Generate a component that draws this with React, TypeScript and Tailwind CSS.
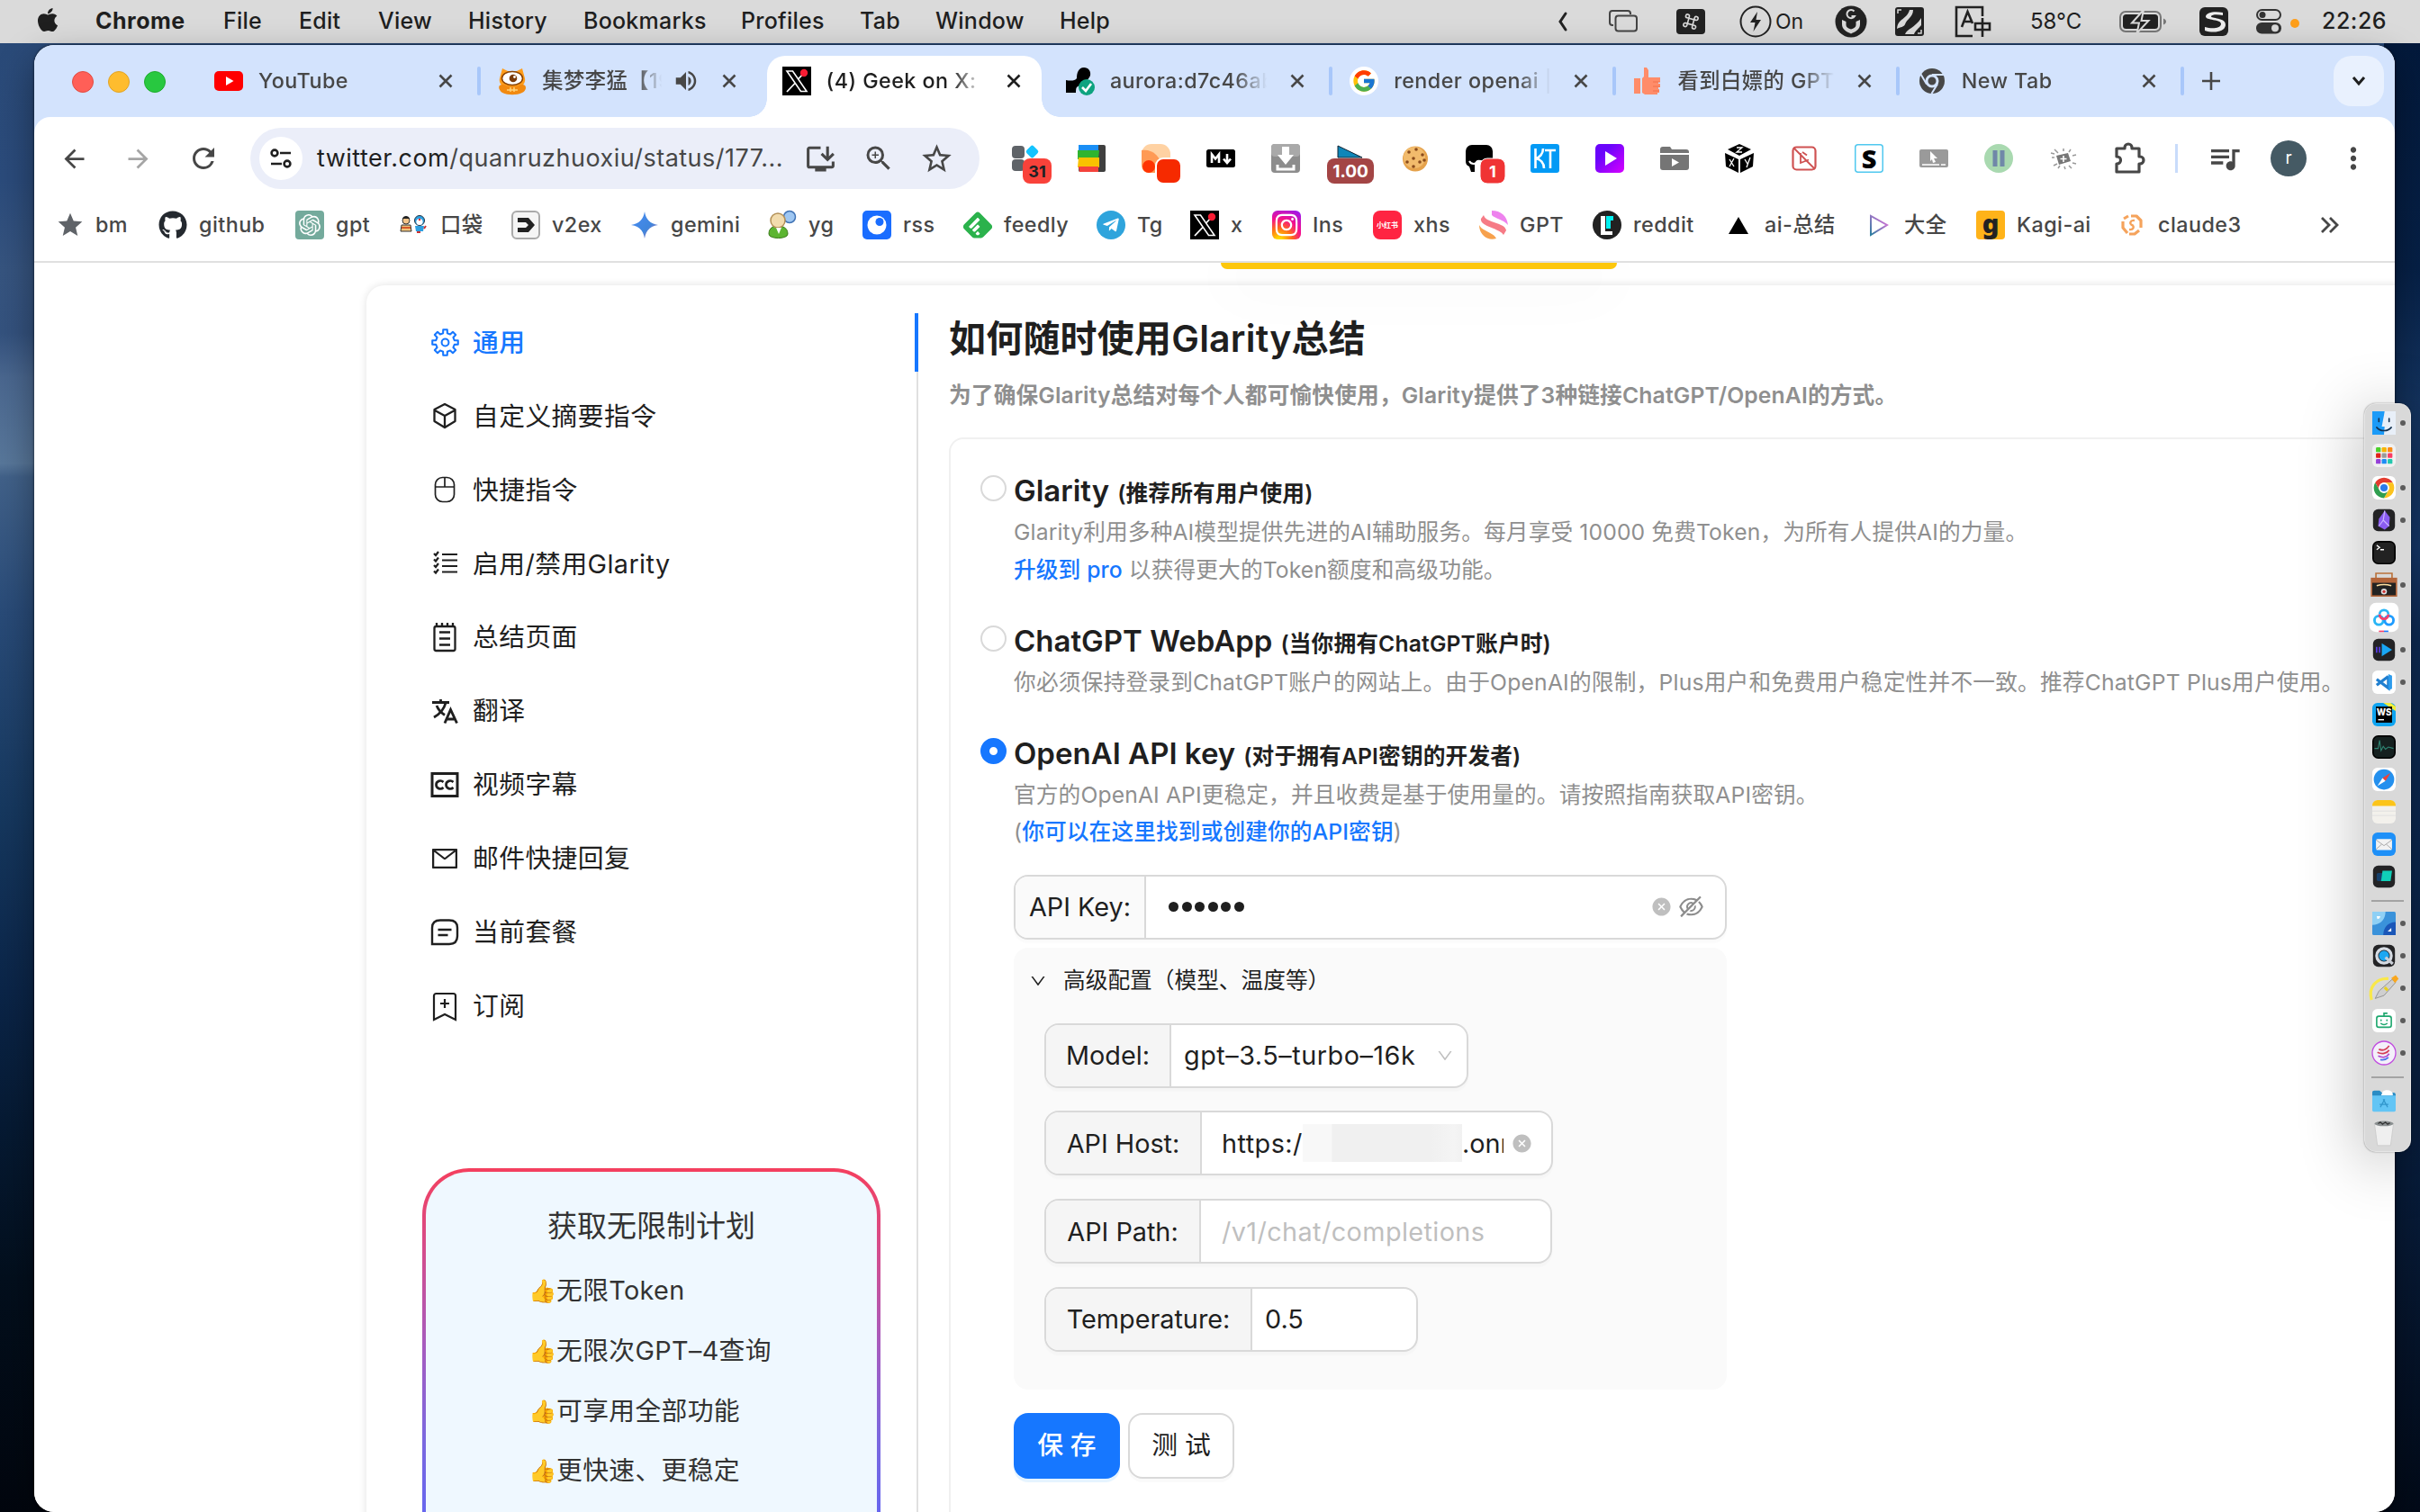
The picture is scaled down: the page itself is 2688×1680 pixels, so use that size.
import type { ReactNode } from 'react'
import { FaApple, FaGithub, FaInstagram, FaTelegramPlane } from 'react-icons/fa'
import { FcGoogle } from 'react-icons/fc'
import {
  MdArrowBack, MdArrowForward, MdRefresh, MdInstallDesktop, MdZoomIn, MdStarBorder, MdStar,
  MdVolumeUp, MdQueueMusic, MdMoreVert,
} from 'react-icons/md'
import { SiOpenai, SiFeedly } from 'react-icons/si'
import { AiOutlineMail, AiOutlineEyeInvisible, AiFillCloseCircle, AiOutlineDown } from 'react-icons/ai'

/* ---------- shared drawings ---------- */

function Svg({ children, className = 'size-8', box = '0 0 32 32' }: { children: ReactNode; className?: string; box?: string }) {
  return <svg viewBox={box} className={`shrink-0 overflow-visible ${className}`} fill="none">{children}</svg>
}

const XLogo = () => (
  <Svg>
    <rect width="32" height="32" fill="#000" />
    <path d="M5 5h6.5l15.5 22.500h-6.500z" stroke="#fff" strokeWidth="1.600" />
    <path d="M25.500 5.500 17.500 14M14 18.500 5 28" stroke="#fff" strokeWidth="1.800" />
    <circle cx="24" cy="7" r="4.200" fill="#f91c33" />
  </Svg>
)

const ChromeBall = () => (
  <Svg>
    <circle cx="16" cy="16" r="14" fill="#474747" />
    <path d="M16 9H29M22 19.500 15.500 30M10 19.500 3.500 8.500" stroke="#d3e3fd" strokeWidth="2" />
    <circle cx="16" cy="16" r="6" fill="#474747" stroke="#d3e3fd" strokeWidth="3" />
  </Svg>
)

/* Eight-toothed gear outline, four corner points per tooth. */
const gearPoints = Array.from({ length: 8 }, (_, i) => {
  const at = (deg: number, r: number) => {
    const a = ((i * 45 + deg - 90) * Math.PI) / 180
    return `${(16 + r * Math.cos(a)).toFixed(2)},${(16 + r * Math.sin(a)).toFixed(2)}`
  }
  return [at(-13, 10.2), at(-9, 14), at(9, 14), at(13, 10.2)].join(' ')
}).join(' ')

const Gear = () => (
  <Svg className="size-[33px]">
    <polygon points={gearPoints} stroke="currentColor" strokeWidth="2" strokeLinejoin="round" />
    <circle cx="16" cy="16" r="3.800" stroke="currentColor" strokeWidth="2" />
  </Svg>
)

/* ---------- macOS menu bar ---------- */

const menus: [string, string][] = [
  ['File', 'w-[84px]'], ['Edit', 'w-[88px]'], ['View', 'w-[100px]'], ['History', 'w-[128px]'],
  ['Bookmarks', 'w-[175px]'], ['Profiles', 'w-[132px]'], ['Tab', 'w-[84px]'], ['Window', 'w-[138px]'], ['Help', 'w-[80px]'],
]

function MenuBar() {
  return (
    <div className="flex h-12 shrink-0 items-center bg-[#dadada] pl-[38px] text-[25px] font-medium tracking-[0.01em] text-[#1f1f1f]">
      <FaApple className="mb-1 mr-[38px] size-[30px]" />
      <span className="w-[142px] font-bold tracking-[0.02em]">Chrome</span>
      {menus.map(([name, w]) => <span key={name} className={w}>{name}</span>)}
      <div className="ml-auto flex items-center pr-[36px]">
        <span className="flex w-[59px]">
          <Svg className="h-6 w-4" box="0 0 16 24"><path d="M11 3 5 12l6 9" stroke="#222" strokeWidth="3" strokeLinecap="round" /></Svg>
        </span>
        <span className="flex w-[75px]">
          <Svg><path d="M5 20H4a3 3 0 0 1-3-3V7a3 3 0 0 1 3-3h17a3 3 0 0 1 3 3v1" stroke="#444" strokeWidth="2" /><rect x="7.500" y="9.500" width="23.500" height="17" rx="3" stroke="#444" strokeWidth="2" /></Svg>
        </span>
        <span className="flex w-[70px]">
          <Svg><rect y="2" width="32" height="28" rx="4" fill="#222" /><path d="M13 13h6v6h-6zM13 13h-2a2 2 0 1 1 2-2zM19 13v-2a2 2 0 1 1 2 2zM19 19h2a2 2 0 1 1-2 2zM13 19v2a2 2 0 1 1-2-2z" transform="rotate(15 16 16)" stroke="#dadada" strokeWidth="1.600" /></Svg>
        </span>
        <span className="flex w-[40px]">
          <Svg className="size-[36px]" box="0 0 36 36"><circle cx="18" cy="18" r="16.500" stroke="#222" strokeWidth="2" /><path d="M20 7 12 19h5.500L15.500 29 24 16h-5.500z" fill="#222" /></Svg>
        </span>
        <span className="w-[66px] text-[23px] font-normal tracking-normal">On</span>
        <span className="flex w-[67px]">
          <Svg className="size-[36px]" box="0 0 36 36"><circle cx="18" cy="18" r="17.500" fill="#222" /><path d="M8 16v5c0 6 5 8 10 10.500 5-2.500 10-4.500 10-10.500v-5l-4.500 2v4c0 2-2.500 3.500-5.500 4.500-3-1-5.500-2.500-5.500-4.500v-4z" fill="#dadada" /><path d="M21.500 6.500A4.600 4.600 0 1 0 22 12h-3.500" stroke="#dadada" strokeWidth="2" /></Svg>
        </span>
        <span className="flex w-[66px]">
          <Svg><rect width="32" height="32" rx="3" fill="#222" /><path d="M2 24C3 12 13 14 16 3h4c0 8-7 10-9 16-1 3-5 3-9 5z" fill="#dadada" /><path d="M11 30c2-6 11-7 18-18v8c-3 4-6 5-8 10z" fill="#dadada" /><path d="M3 7V3h4M29 25v4h-4" stroke="#dadada" strokeWidth="1.500" /></Svg>
        </span>
        <span className="flex w-[84px]">
          <Svg className="h-[36px] w-[42px]" box="0 0 42 36"><path d="M31 12V2H2v32h18" stroke="#222" strokeWidth="2.600" /><path d="m8 24 6.500-17L20 20M10.500 18h8" stroke="#222" strokeWidth="2.600" /><path d="M23 20h16v7H23zM31 14v21" stroke="#222" strokeWidth="2.600" /></Svg>
        </span>
        <span className="w-[99px] text-[24px] font-normal tracking-normal">58°C</span>
        <span className="flex w-[89px]">
          <Svg className="h-6 w-[52px]" box="0 0 52 24"><rect x="1" y="1" width="45" height="22" rx="6" stroke="#777" strokeWidth="2" /><rect x="4" y="4" width="39" height="16" rx="3.500" fill="#222" /><path d="M49 8.500c2 .8 3 2 3 3.500s-1 2.700-3 3.500z" fill="#777" /><path d="M27-1 14 13.500h8L19.500 25l13-14h-8z" fill="#222" stroke="#dadada" strokeWidth="2" /></Svg>
        </span>
        <span className="flex w-[63px]">
          <Svg><rect width="32" height="32" rx="6" fill="#222" /><path d="M26 6C16 4 8 6 7 10c-1 5 18 3 17 9-1 5-11 5-18 3v4c9 3 22 2 23-6 1-9-17-7-16-10 1-2 7-2 13-1z" fill="#eee" /></Svg>
        </span>
        <span className="flex w-[38px]">
          <Svg className="h-[28px] w-[28px]" box="0 0 28 28"><rect x="1" y="1" width="26" height="11" rx="5.500" stroke="#333" strokeWidth="2" /><circle cx="7" cy="6.500" r="3.500" fill="#333" /><rect y="15" width="28" height="12.500" rx="6.200" fill="#333" /><circle cx="21" cy="21.200" r="4" fill="#dadada" /></Svg>
        </span>
        <span className="flex w-[35px] pt-1"><i className="size-2.5 rounded-full bg-[#ff9f1a]" /></span>
        <span className="w-[73px] tracking-[0.02em]">22:26</span>
      </div>
    </div>
  )
}

/* ---------- browser tabs ---------- */

const CloseX = ({ dark = false }: { dark?: boolean }) => (
  <Svg className="size-4" box="0 0 16 16"><path d="m1.500 1.500 13 13m0-13-13 13" stroke={dark ? '#1f1f1f' : '#474747'} strokeWidth="2.600" /></Svg>
)

function Tab({ icon, title, active = false, sound = false, sep = true }: { icon: ReactNode; title: string; active?: boolean; sound?: boolean; sep?: boolean }) {
  return (
    <div className="relative flex h-[68px] w-[315.3px] shrink-0 items-center self-end pb-3">
      {active && (
        <>
          <div className="absolute inset-y-0 -left-[17px] right-[27px] rounded-t-[20px] bg-white" />
          <div className="absolute bottom-0 -left-[37px] size-5 bg-[radial-gradient(circle_at_0_0,transparent_19.5px,#fff_20px)]" />
          <div className="absolute bottom-0 right-[7px] size-5 bg-[radial-gradient(circle_at_100%_0,transparent_19.5px,#fff_20px)]" />
        </>
      )}
      <div className="relative flex size-8">{icon}</div>
      <div className={`relative ml-[17px] overflow-hidden whitespace-nowrap text-[23.3px] font-medium tracking-[0.02em] [mask-image:linear-gradient(to_right,#000_78%,transparent_98%)] ${sound ? 'w-[136px]' : 'w-[178px]'} ${active ? 'text-[#1f1f1f]' : 'text-[#474747]'}`}>{title}</div>
      {sound && <MdVolumeUp className="ml-[9px] size-[30px] text-[#474747]" />}
      <div className={`relative ${sound ? 'ml-[25px]' : 'ml-[22px]'}`}><CloseX dark={active} /></div>
      {sep && <div className="ml-[27px] h-8 w-1 rounded-full bg-[#a8c7fa]" />}
    </div>
  )
}

function TabStrip() {
  return (
    <div className="flex h-20 shrink-0 items-center bg-[#d3e3fd]">
      <div className="flex w-[200px] shrink-0 items-center gap-4 pl-[42px] pt-0.5">
        <i className="size-6 rounded-full border border-[#e24b41] bg-[#ff5f57]" />
        <i className="size-6 rounded-full border border-[#e1a325] bg-[#febc2e]" />
        <i className="size-6 rounded-full border border-[#1dad2b] bg-[#28c840]" />
      </div>
      <Tab title="YouTube" icon={<Svg><rect y="5" width="32" height="22" rx="5" fill="#f00" /><path d="m13 11 8.500 5-8.500 5z" fill="#fff" /></Svg>} />
      <Tab title="集梦李猛【19" sound sep={false} icon={
        <Svg>
          <path d="M5 2l6 3h10l6-3 3 11c1 4-2 8-4 9H6c-3-2-5-5-4-9z" fill="#ff9d1b" />
          <path d="M2 21c2-2 6-1 9 1h10c3-2 7-3 9-1s1 6-3 8c-6 3-16 3-22 0-3-2-5-6-3-8z" fill="#f28a10" />
          <ellipse cx="16" cy="13" rx="11.500" ry="7.500" fill="#fff" stroke="#8c4300" strokeWidth="1.500" />
          <circle cx="17" cy="13" r="4.300" fill="#7a3b0a" /><circle cx="18.500" cy="11.500" r="1.400" fill="#fff" />
          <path d="M10 26h12M14 23v5M18 23v5" stroke="#ffd27a" strokeWidth="1.500" />
        </Svg>} />
      <Tab title="(4) Geek on X:" active sep={false} icon={<XLogo />} />
      <Tab title="aurora:d7c46ab" icon={
        <Svg>
          <path d="M0 15c5 1 10 1 12-2 0-6 2-12 8-12 5 0 8 4 7 9-1 3-4 5-5 7-2 2-4 3-4 5-2-1-4-1-6 1-1 1-1 4-1 6H0z" fill="#000" />
          <circle cx="23" cy="23" r="9" fill="#0ea37f" /><path d="m18 23 4 4 6-8" stroke="#fff" strokeWidth="2.600" />
        </Svg>} />
      <Tab title="render openai |" icon={<span className="flex size-8 items-center justify-center rounded-full bg-white"><FcGoogle className="size-7" /></span>} />
      <Tab title="看到白嫖的 GPT" icon={
        <Svg><path d="M1 13h7v17H1zM10 13l2-2V1h3l2 3v8h13v5h-2v2h2v4h-2v2h1v4h-2v2H13l-3-2z" fill="#ff8c69" /><path d="M22 17h8M22 22h8M22 27h7" stroke="#f2704a" strokeWidth="1.200" /></Svg>} />
      <Tab title="New Tab" icon={<ChromeBall />} />
      <Svg className="size-[22px]" box="0 0 22 22"><path d="M11 1v20M1 11h20" stroke="#474747" strokeWidth="2.600" /></Svg>
      <div className="ml-auto mr-3 flex h-14 w-14 items-center justify-center rounded-[20px] bg-[#e9f1fe]">
        <Svg className="h-3 w-4" box="0 0 16 12"><path d="m2 2 6 7 6-7" stroke="#1f1f1f" strokeWidth="3" /></Svg>
      </div>
    </div>
  )
}

/* ---------- toolbar ---------- */

const extensions: ReactNode[] = [
  <>
    <rect x="0" y="2" width="14" height="14" rx="4" fill="#5f6368" /><rect x="0" y="17" width="14" height="13" rx="4" fill="#5f6368" />
    <rect x="17" y="3" width="11" height="11" rx="2.500" transform="rotate(45 22.500 8.500)" fill="#14c4ff" />
    <rect x="12" y="16" width="32" height="28" rx="8" fill="#f9423a" />
    <text x="28" y="36.500" textAnchor="middle" fontSize="18" fontWeight="700" fill="#202124">31</text>
  </>,
  <>
    <rect x="2" y="1" width="30" height="30" rx="2" fill="#3f3f3f" /><path d="M2 1h22v8H2z" fill="#1a8ff5" /><path d="M1 7h24l-1 10H1z" fill="#2fb42f" />
    <path d="M2 15h23v11H1z" fill="#f9c200" /><path d="M2 25h22v6H3z" fill="#f4433c" />
  </>,
  <>
    <rect width="32" height="30" rx="11" fill="#ffd2a3" /><path d="M0 7c11-2 22 6 22 20l-6 5H8c-5 0-8-4-8-9z" fill="#ff9a55" /><circle cx="8" cy="25" r="7" fill="#ff3403" />
    <rect x="16" y="16" width="28" height="28" rx="8" fill="#f62a00" stroke="#fff" strokeWidth="2" />
  </>,
  <>
    <rect y="6" width="32" height="20" rx="2.500" fill="#000" /><path d="M6 21v-9.500l4 5 4-5V21M23 11v9m-4-3.500 4 4.500 4-4.500" stroke="#fff" strokeWidth="2.600" />
  </>,
  <>
    <rect width="32" height="32" rx="4" fill="#8d8d8d" /><rect width="32" height="14" rx="4" fill="#a9a9a9" /><path d="M12 3h8v9h5l-9 11-9-11h5z" fill="#fff" /><path d="M7 23v5h18v-5" stroke="#fff" strokeWidth="3" />
  </>,
  <>
    <path d="M2 2v13h27z" fill="#0f86b8" stroke="#123" strokeWidth="1" /><rect x="-10" y="16" width="52" height="28" rx="8" fill="#a34545" />
    <text x="16" y="37" textAnchor="middle" fontSize="19" fontWeight="700" fill="#fff">1.00</text>
  </>,
  <>
    <circle cx="16" cy="16.500" r="14" fill="#e5a24c" /><circle cx="15" cy="15" r="12" fill="#f2bb6c" />
    {[[9, 9], [17, 6], [24, 12], [14, 16], [7, 20], [21, 20], [14, 25], [26, 18]].map(([x, y]) => <circle key={`${x}-${y}`} cx={x} cy={y} r="1.800" fill="#8a4b1c" />)}
  </>,
  <>
    <path d="M0 8a7 7 0 0 1 7-7h16a7 7 0 0 1 7 7v10H16c-3-1-6 1-6 5v8H6l-2-6c-3-1-4-3-4-6z" fill="#000" /><path d="M4 19c2 4 8 4 10 0" stroke="#fff" strokeWidth="2" />
    <rect x="16" y="16" width="28" height="28" rx="8" fill="#f03434" stroke="#fff" strokeWidth="1" />
    <text x="30" y="36.500" textAnchor="middle" fontSize="18" fontWeight="700" fill="#fff">1</text>
  </>,
  <>
    <rect width="32" height="32" rx="3" fill="#039af5" /><path d="M5.500 5v22M14 5c0 6-4 10-8 11 5 1 9 5 9 11M16 7h12M22 7v20" stroke="#fff" strokeWidth="2.600" />
  </>,
  <>
    <defs><linearGradient id="play" x1="0" x2="1" y2="1"><stop offset=".3" stopColor="#6a05fb" /><stop offset="1" stopColor="#d800ff" /></linearGradient></defs>
    <rect width="32" height="32" rx="5" fill="url(#play)" /><path d="m11 8 13 8-13 8z" fill="#fff" />
  </>,
  <>
    <path d="M0 6a3 3 0 0 1 3-3h8l2 3h16a3 3 0 0 1 3 3v1H0z" fill="#757575" /><path d="M0 12h32v14a3 3 0 0 1-3 3H3a3 3 0 0 1-3-3z" fill="#757575" /><path d="m13 16 8 4.500-8 4.500z" fill="#fff" />
  </>,
  <>
    <path d="m16 0 13 6-13 7L3 6zM0 10l15 7v15L1 25zM32 10l-15 7v15l14-7z" fill="#000" /><path d="M13 4h6l-6 5h6M5 17l5 8m0-9-5 9M22 17l3 5m3-7-4 11" stroke="#fff" strokeWidth="1.300" />
  </>,
  <>
    <rect x="3.500" y="3.500" width="25" height="25" rx="4" stroke="#cf5252" strokeWidth="2.200" /><path d="M4 4l24 24M12 10v11l9-3.500M14 9l5 3.500" stroke="#cf5252" strokeWidth="1.800" />
  </>,
  <>
    <rect x=".75" y=".75" width="30.500" height="30.500" rx="3" fill="#fff" stroke="#4fc8ef" strokeWidth="1.500" />
    <text x="16" y="26.500" textAnchor="middle" fontSize="29" fontWeight="900" fontFamily="Noto Sans" fill="#000">S</text>
  </>,
  <>
    <rect y="6" width="32" height="20" rx="2" fill="#9a9a9a" /><path d="m12 8 8 8h-4l2 4-3 1-1-4-2 2z" fill="#fff" /><path d="M3 23h19m2 0h5" stroke="#fff" strokeWidth="1.500" />
  </>,
  <>
    <circle cx="16" cy="16" r="16" fill="#a9d9b0" /><rect x="9.500" y="7" width="5" height="18" fill="#7088a8" /><rect x="17.500" y="7" width="5" height="18" fill="#7088a8" />
  </>,
  <>
    <path d="M8 13l13-3 3 9-13 4z" fill="#777" /><path d="M16 13v7m-3.500-3.500h7" stroke="#fff" strokeWidth="1.600" />
    <path d="M6 6l4 4m6-5v3m8-2-2 3m8 3-4 1M3 15h3m-1 9 4-2m1 5 2-3m6 4-1-3m8 2-3-3m8-2-4-1M2 10l4 1" stroke="#999" strokeWidth="1.500" />
  </>,
]

function Toolbar() {
  return (
    <div className="bg-[#d3e3fd]">
      <div className="flex h-[90px] items-center rounded-t-[18px] bg-white pt-0.5 text-[#474747]">
        <MdArrowBack className="ml-[28px] size-[33px]" />
        <MdArrowForward className="ml-[38px] size-[33px] text-[#a5a5a5]" />
        <MdRefresh className="ml-[38px] size-[36px]" />
        <div className="ml-[34px] flex h-[68px] w-[810px] shrink-0 items-center rounded-full bg-[#ebeef9] pl-2.5">
          <span className="flex size-12 items-center justify-center rounded-full bg-white">
            <Svg className="size-6" box="0 0 24 24"><g stroke="#1f1f1f" strokeWidth="2.600"><circle cx="5" cy="6" r="3.400" /><path d="M11 6h12M1 18h12" /><circle cx="19" cy="18" r="3.400" /></g></Svg>
          </span>
          <span className="ml-4 w-[541px] shrink-0 whitespace-nowrap text-[27px] tracking-[0.018em] text-[#474747]"><span className="text-[#1f1f1f]">twitter.com</span>/quanruzhuoxiu/status/177...</span>
          <MdInstallDesktop className="size-[37px] shrink-0" />
          <MdZoomIn className="ml-[28px] size-[36px] shrink-0" />
          <MdStarBorder className="ml-[27px] size-[39px] shrink-0" />
        </div>
        <div className="ml-[36px] flex gap-10">
          {extensions.map((e, i) => <Svg key={i}>{e}</Svg>)}
        </div>
        <Svg className="ml-[39px] size-9" box="0 0 36 36">
          <path d="M4 7h9V6a4 4 0 0 1 8 0v1h8v9h1a4 4 0 0 1 0 8h-1v9H4v-9c6 0 6-8 0-8z" stroke="#474747" strokeWidth="3.200" strokeLinejoin="round" />
        </Svg>
        <div className="ml-[33px] h-8 w-[3px] bg-[#c9dcfb]" />
        <MdQueueMusic className="ml-[32px] size-[40px]" />
        <span className="ml-[31px] flex size-10 items-center justify-center rounded-full bg-[#455a64] text-[19px] text-white">r</span>
        <MdMoreVert className="ml-[33px] size-[38px]" />
      </div>
    </div>
  )
}

/* ---------- bookmarks ---------- */

const bookmarks: [string, string, ReactNode][] = [
  ['github', 'w-[152px]', <FaGithub className="size-8 text-[#24292f]" />],
  ['gpt', 'w-[116px]', <span className="flex size-8 items-center justify-center rounded bg-[#74aa9c]"><SiOpenai className="size-6 text-white" /></span>],
  ['口袋', 'w-[124px]', (
    <Svg>
      <circle cx="7" cy="11" r="4" fill="#f4c489" stroke="#333" /><path d="M3 9c1-4 7-4 8 0z" fill="#222" /><path d="M2 16h10l1 7H1z" fill="#f0c27a" stroke="#333" /><path d="M2 19h10" stroke="#d5582b" strokeWidth="2" /><circle cx="22" cy="11" r="5.500" fill="#2b9fe0" stroke="#234" /><circle cx="22" cy="12.500" r="3.600" fill="#fff" /><circle cx="22" cy="10" r="1.200" fill="#e22" /><path d="M17 17h10l-1 6h-8z" fill="#2b9fe0" /><path d="M27 20l2-3M19 24h4" stroke="#c33" strokeWidth="2" />
    </Svg>
  )],
  ['v2ex', 'w-[132px]', <Svg><rect x="1" y="1" width="30" height="30" rx="5" fill="#f5f5f5" stroke="#aaa" strokeWidth="2" /><path d="M7 8h12l7 8-7 8H7v-5h9l3-3-3-3H7z" fill="#222" /></Svg>],
  ['gemini', 'w-[153px]', (
    <Svg><defs><linearGradient id="gem" x2="1" y2="1"><stop stopColor="#4b8cf5" /><stop offset=".6" stopColor="#3f86dd" /><stop offset="1" stopColor="#b86fb0" /></linearGradient></defs><path d="M16 1c1.500 9 6 13.500 15 15-9 1.500-13.500 6-15 15-1.500-9-6-13.500-15-15 9-1.500 13.500-6 15-15z" fill="url(#gem)" /></Svg>
  )],
  ['yg', 'w-[105px]', (
    <Svg><circle cx="24" cy="7" r="6.500" fill="#9fc7f2" stroke="#4173b5" strokeWidth="1.500" /><path d="M1 26c0-7 5-9 10-9s11 2 11 9c0 6-21 6-21 0z" fill="#5cb531" stroke="#3a7a1b" /><circle cx="11" cy="11" r="8" fill="#f2dcae" stroke="#b39057" strokeWidth="1.500" /><path d="m9 19 3 7 3-7z" fill="#fff" /></Svg>
  )],
  ['rss', 'w-[112px]', <Svg><rect width="32" height="32" rx="5" fill="#1a6dff" /><circle cx="16" cy="16" r="10.500" fill="#fff" /><circle cx="19" cy="12.500" r="4.500" fill="#1a6dff" /></Svg>],
  ['feedly', 'w-[148px]', <SiFeedly className="size-8 text-[#2bb24c]" />],
  ['Tg', 'w-[104px]', <span className="flex size-8 items-center justify-center rounded-full bg-[#2fa4dc]"><FaTelegramPlane className="size-5 text-white" /></span>],
  ['x', 'w-[91px]', <XLogo />],
  ['Ins', 'w-[112px]', <span className="flex size-8 items-center justify-center rounded-md bg-[radial-gradient(circle_at_25%_105%,#ffd800_8%,#ff6a1a_35%,#f5108c_60%,#8a1bff_100%)]"><FaInstagram className="size-7 text-white" /></span>],
  ['xhs', 'w-[118px]', <span className="flex size-8 items-center justify-center rounded-lg bg-[#ff2442] text-[8px] font-bold tracking-normal text-white">小红书</span>],
  ['GPT', 'w-[126px]', (
    <Svg><path d="M14 0c10 0 17 6 18 16-5-6-14-7-18-11z" fill="#ee82ee" /><path d="M5 5c2 9 24 8 25 17l-3 5C22 19 0 18 2 9z" fill="#f67b86" /><path d="M0 16c3 7 16 8 19 15C8 34 0 26 0 16z" fill="#f7a14d" /></Svg>
  )],
  ['reddit', 'w-[146px]', <Svg><circle cx="16" cy="16" r="16" fill="#222" /><path d="M9 6h5v17h8v4H9z" fill="#fff" /><path d="M15 6h8v5h-3v9h-5z" fill="#00f0f0" /></Svg>],
  ['ai-总结', 'w-[155px]', <Svg><path d="M16 7 27 26H5z" fill="#000" /></Svg>],
  ['大全', 'w-[125px]', (
    <Svg><defs><linearGradient id="da" x2="1" y1="1" y2="0"><stop stopColor="#2c7fa0" /><stop offset="1" stopColor="#f06fe0" /></linearGradient></defs><path d="M8 6v21l18-11z" stroke="url(#da)" strokeWidth="2" /></Svg>
  )],
  ['Kagi-ai', 'w-[157px]', <span className="flex size-8 items-center justify-center rounded bg-[#ffb319] pb-1.5 font-['Noto_Sans'] text-[29px] font-black leading-none tracking-normal text-[#222]">g</span>],
  ['claude3', 'w-[150px]', <Svg><path d="M15 6h6l5 5v8M24 22l-5 4h-6M11 25l-5-6v-7M7 9l5-3" stroke="#f5a35c" strokeWidth="3.200" strokeLinejoin="round" /><path d="M19 11c-5-1-6 4-3 5s2 6-3 5" stroke="#f5a35c" strokeWidth="2.400" /></Svg>],
]

function Bookmarks() {
  return (
    <div className="flex h-[72px] shrink-0 items-center border-b-2 border-[#e0e0e0] pb-[10px] text-[23.3px] font-medium tracking-[0.02em] text-[#474747]">
      <MdStar className="ml-[24px] size-8 text-[#5f6368]" />
      <span className="ml-[12px] w-[70px]">bm</span>
      {bookmarks.map(([label, w, icon]) => (
        <span key={label} className={`flex shrink-0 items-center gap-[13px] whitespace-nowrap ${w}`}>{icon}{label}</span>
      ))}
      <Svg className="ml-auto mr-[61px] h-5 w-[22px]" box="0 0 22 20"><path d="m2 2 8 8-8 8m9-16 8 8-8 8" stroke="#474747" strokeWidth="2.800" /></Svg>
    </div>
  )
}

/* ---------- settings page ---------- */

const line = { stroke: '#1f1f1f', strokeWidth: 2 }

const nav: [string, ReactNode][] = [
  ['通用', <Gear />],
  ['自定义摘要指令', <Svg className="size-[30px]" box="0 0 30 30"><path d="m15 2 11.500 6v13L15 28 3.500 21V8zM4 9l11 6 11-6M15 15v12" {...line} strokeWidth={2.300} strokeLinejoin="round" /></Svg>],
  ['快捷指令', <Svg className="size-[30px]" box="0 0 30 30"><rect x="4.500" y="1.500" width="21" height="27" rx="8" {...line} strokeWidth={1.700} /><path d="M5 12h20M15 2v10" {...line} strokeWidth={1.700} /></Svg>],
  ['启用/禁用Glarity', <Svg className="size-[30px]" box="0 0 30 30"><path d="M12 5h17M12 11.500h17M12 18h17M12 24.500h17M3 4l2 2 3-4M3 10.500l2 2 3-4M3 17l2 2 3-4M3 23.500l2 2 3-4" {...line} strokeWidth={2.200} /></Svg>],
  ['总结页面', <Svg className="size-[32px]" box="0 0 32 32"><rect x="4.500" y="4" width="23" height="27" rx="2" {...line} strokeWidth={2.300} /><path d="M7 0v4M13 0v4M19 0v4M25 0v4M10 10.500h12M10 17.500h12M10 24.500h12" {...line} strokeWidth={2.300} /></Svg>],
  ['翻译', <Svg className="size-[30px]" box="0 0 30 30"><path d="M1 5.500h19M10.500 2v4M16 6c-1.500 6-6 12-13 16M6 9c2 5 5 8 9 10.500" {...line} strokeWidth={2.800} /><path d="M15 28.500 21.500 13.500 28.500 28.500M17.500 24h8.500" {...line} strokeWidth={2.900} /></Svg>],
  ['视频字幕', <Svg className="size-[32px]" box="0 0 32 32"><rect x="2" y="3.500" width="28" height="25" {...line} strokeWidth={3} /><path d="M14.500 13c-3-3-8-1-8 3s5 6 8 3M25.500 13c-3-3-8-1-8 3s5 6 8 3" {...line} strokeWidth={2.700} /></Svg>],
  ['邮件快捷回复', <AiOutlineMail className="size-[32px] shrink-0" />],
  ['当前套餐', <Svg className="size-[32px]" box="0 0 32 32"><path d="M11 2.500h10c6 0 9 3 9 8.500v9c0 6-3 9-9 9H2V11c0-6 3-8.500 9-8.500zM8.500 13h15M8.500 19h11" {...line} strokeWidth={2.400} /></Svg>],
  ['订阅', <Svg className="size-[32px]" box="0 0 32 32"><path d="M4 31V4.500A2.500 2.500 0 0 1 6.500 2h19A2.500 2.500 0 0 1 28 4.500V31l-12-6zM16 8v10M11 13h10" {...line} strokeWidth={2.200} /></Svg>],
]

const perks = ['无限Token', '无限次GPT–4查询', '可享用全部功能', '更快速、更稳定']

function Sidebar() {
  return (
    <div className="flex w-[613px] shrink-0 flex-col pt-[31px]">
      <div className="border-r-2 border-[#e0e0e0]">
        {nav.map(([label, icon], i) => (
          <div key={label} className={`relative mb-[16.900px] flex h-[65px] items-center pl-[72px] text-[28.8px] ${i === 0 ? 'font-medium text-[#1677ff]' : 'text-[#1f1f1f]'}`}>
            <span className="flex w-[30px] shrink-0 justify-center">{icon}</span>
            <span className="ml-[16px] whitespace-nowrap tracking-[0.014em]">{label}</span>
            {i === 0 && <i className="absolute inset-y-0 -right-0.5 w-1 bg-[#1677ff]" />}
          </div>
        ))}
        <div className="ml-[62px] mt-[148px] h-[600px] w-[509px] rounded-t-[52px] bg-[linear-gradient(to_bottom,#f43f5e_0,#d54d8c_90px,#a55cc0_200px,#7b68df_300px,#6366f1_400px)] p-1">
          <div className="h-full rounded-t-[48px] bg-[#eff8ff] pt-[34px] text-[#333]">
            <div className="text-center text-[33px] leading-[52px]">获取无限制计划</div>
            <ul className="mt-[13px] pl-[114px] text-[28.8px] leading-[66.800px]">
              {perks.map((p) => (
                <li key={p} className="flex items-center whitespace-nowrap">
                  <span className="w-[31px] text-[25px]">👍</span>
                  <span className="tracking-[0.012em]">{p}</span>
                </li>
              ))}
            </ul>
          </div>
        </div>
      </div>
    </div>
  )
}

function Option({ title, note, checked = false, className = '', children }: { title: string; note: string; checked?: boolean; className?: string; children: ReactNode }) {
  return (
    <div className={`flex items-start ${className}`}>
      <span className={`mt-[6px] size-[29px] shrink-0 rounded-full ${checked ? 'border-[10.500px] border-[#1677ff] bg-white' : 'border-2 border-[#d9d9d9] bg-white'}`} />
      <div className="ml-[8px] whitespace-nowrap">
        <div className="flex h-[49px] items-baseline gap-[9px] pt-0.5 font-semibold text-[#1f1f1f]">
          <span className="text-[33px] leading-[42px]">{title}</span>
          <span className="text-[24.700px] tracking-[0.006em]">{note}</span>
        </div>
        <div className="text-[24.700px] leading-[41.500px] tracking-[0.005em] text-[#8f8f8f]">{children}</div>
      </div>
    </div>
  )
}

function Field({ label, width, addon, children, white = false }: { label: string; width: string; addon: string; children: ReactNode; white?: boolean }) {
  return (
    <div className={`flex h-[72px] items-stretch overflow-hidden rounded-2xl border-2 border-[#d9d9d9] bg-white text-[28.8px] text-[#1f1f1f] shadow-[0_4px_2px_rgba(0,0,0,0.02)] ${width}`}>
      <div className={`flex shrink-0 items-center justify-center border-r-2 border-[#d9d9d9] ${white ? 'bg-[#fafafa]' : 'bg-[#f5f5f5]'} ${addon}`}>{label}</div>
      <div className="flex min-w-0 flex-1 items-center whitespace-nowrap">{children}</div>
    </div>
  )
}

function Settings() {
  return (
    <div className="flex w-[1700px] shrink-0 flex-col pl-[34px] pt-[34px]">
      <h1 className="text-[41px] font-semibold leading-[50px] tracking-[0.005em] text-[#1f1f1f]">如何随时使用Glarity总结</h1>
      <p className="mt-5 whitespace-nowrap text-[24.700px] font-semibold leading-9 tracking-[0.006em] text-[#8f8f8f]">为了确保Glarity总结对每个人都可愉快使用，Glarity提供了3种链接ChatGPT/OpenAI的方式。</p>
      <div className="mt-[29px] h-[1400px] rounded-tl-2xl border-2 border-[#f0f0f0] pl-[33px] pt-[34px]">
        <Option title="Glarity" note="(推荐所有用户使用)">
          <p>Glarity利用多种AI模型提供先进的AI辅助服务。每月享受 10000 免费Token，为所有人提供AI的力量。</p>
          <p><span className="font-medium text-[#1677ff]">升级到 pro</span> 以获得更大的Token额度和高级功能。</p>
        </Option>
        <Option className="mt-[35px]" title="ChatGPT WebApp" note="(当你拥有ChatGPT账户时)">
          <p className="tracking-[0.008em]">你必须保持登录到ChatGPT账户的网站上。由于OpenAI的限制，Plus用户和免费用户稳定性并不一致。推荐ChatGPT Plus用户使用。</p>
        </Option>
        <Option className="mt-[34px]" checked title="OpenAI API key" note="(对于拥有API密钥的开发者)">
          <p>官方的OpenAI API更稳定，并且收费是基于使用量的。请按照指南获取API密钥。</p>
          <p>(<span className="font-medium text-[#1677ff]">你可以在这里找到或创建你的API密钥</span>)</p>
        </Option>
        <div className="ml-[37px] mt-[26px] w-[792px]">
          <Field label="API Key:" width="w-full" addon="w-[145px]" white>
            <span className="ml-[25px] flex gap-[3.600px]">{[0, 1, 2, 3, 4, 5].map((i) => <i key={i} className="size-[11px] rounded-full bg-[#1f1f1f]" />)}</span>
            <AiFillCloseCircle className="ml-auto size-[23px] text-[#bfbfbf]" />
            <AiOutlineEyeInvisible className="ml-1.5 mr-[22px] size-[31px] text-[#8c8c8c]" />
          </Field>
          <div className="mt-[9px] h-[491px] rounded-2xl bg-[#fafafa] pl-[34px]">
            <div className="-ml-[34px] flex h-[74px] items-center pl-[17px] pt-px text-[24.700px] text-[#1f1f1f]">
              <AiOutlineDown className="size-[20px]" />
              <span className="ml-[18px]">高级配置（模型、温度等）</span>
            </div>
            <div className="mt-[10px] flex flex-col gap-[25.800px]">
              <Field label="Model:" width="w-[471px]" addon="w-[139px]">
                <span className="ml-[14px] tracking-[0.018em]">gpt–3.5–turbo–16k</span>
                <AiOutlineDown className="ml-auto mr-[14px] size-[20px] text-[#bfbfbf]" />
              </Field>
              <Field label="API Host:" width="w-[565px]" addon="w-[173px]">
                <span className="ml-[22px] tracking-[0.016em]">https:/</span>
                <span className="h-[42px] w-[177px] shrink-0 bg-[linear-gradient(to_right,#f8f8f8_0,#f8f8f8_32px,#f0f0f0_33px,#f0f0f0_80%,#f4f4f4_95%,#f1f1f1)]" />
                <span className="w-[46px] overflow-hidden">.onr</span>
                <AiFillCloseCircle className="ml-auto mr-[21px] size-[23px] text-[#bfbfbf]" />
              </Field>
              <Field label="API Path:" width="w-[564px]" addon="w-[172px]">
                <span className="ml-[23px] tracking-[0.014em] text-[#bfbfbf]">/v1/chat/completions</span>
              </Field>
              <Field label="Temperature:" width="w-[415px]" addon="w-[229px]"><span className="ml-[14px]">0.5</span></Field>
            </div>
          </div>
          <div className="mt-[26px] flex gap-[9px] text-[28.8px]">
            <button className="h-[73px] w-[118px] rounded-2xl bg-[#1677ff] font-medium text-white shadow-[0_4px_0_rgba(5,145,255,0.1)]">保 存</button>
            <button className="h-[73px] w-[118px] rounded-2xl border-2 border-[#d9d9d9] bg-white text-[#1f1f1f] shadow-[0_4px_0_rgba(0,0,0,0.02)]">测 试</button>
          </div>
        </div>
      </div>
    </div>
  )
}

function Page() {
  return (
    <div className="relative h-[1390px] overflow-hidden bg-white">
      <div className="absolute left-[1318px] top-0 h-[7px] w-[440px] rounded-b-xl bg-[#fdc70c] shadow-[0_12px_70px_rgba(0,0,0,0.14)]" />
      <div className="relative ml-[369px] mt-[25px] flex h-[1500px] w-[2400px] rounded-[20px] shadow-[0_0_10px_rgba(0,0,0,0.12)]">
        <Sidebar />
        <Settings />
      </div>
    </div>
  )
}

/* ---------- dock ---------- */

const dark = <rect x="1" y="1" width="30" height="30" rx="7" fill="#232325" />
const white = <rect x="0" y="0" width="32" height="32" rx="7" fill="#fff" />

const apps: [boolean, ReactNode][] = [
  [true, <><path d="M0 0h17v32H0z" fill="#1c9bf8" /><path d="M17 0h15v32H16l1-11h-4z" fill="#e8eff8" /><path d="M9 10v4M23 10v4M6 22c5 6 15 6 20 0" stroke="#12304f" strokeWidth="2" strokeLinecap="round" /></>],
  [false, <><rect width="32" height="32" rx="7" fill="#f1f1f1" />{['#4cd02c', '#f7b500', '#fa8a14', '#e2231a', '#9a9a9a', '#fb3c64', '#9540d8', '#1d8df5', '#23c8ae'].map((c, i) => <rect key={c} x={5 + (i % 3) * 8} y={5 + Math.floor(i / 3) * 8} width="6.500" height="6.500" rx="1.500" fill={c} />)}</>],
  [true, <>{white}<path d="M3.900 9A14 14 0 0 1 28.100 9H16a7 7 0 0 0-6.060 10.500z" fill="#e33b2e" /><path d="M28.100 9A14 14 0 0 1 16 30l6.060-10.500A7 7 0 0 0 16 9z" fill="#fcc31e" /><path d="M16 30A14 14 0 0 1 3.900 9l6.040 10.500a7 7 0 0 0 12.120 0z" fill="#2f9e4f" /><circle cx="16" cy="16" r="6" fill="#2a7bea" stroke="#fff" strokeWidth="2" /></>],
  [true, <>{dark}<path d="m17 3 7 9-1 12-6 5-9-5 1-10z" fill="#8a5cf0" /><path d="m17 3-2 13 8 8M15 16l-6 8" stroke="#c9b2ff" strokeWidth="1.500" /></>],
  [false, <><rect x="1" y="1" width="30" height="30" rx="7" fill="#222" stroke="#000" strokeWidth="2" /><path d="m6 6 4 3-4 3M11 12h5" stroke="#fff" strokeWidth="1.600" /></>],
  [true, <><path d="M5 6V0h22v6" stroke="#b9713a" strokeWidth="2" /><rect x="-2" y="6" width="36" height="26" fill="#b3653a" /><rect x="0" y="13" width="32" height="17" fill="#222" /><path d="M6 17c6-2 14-2 20 0" stroke="#ffe0a0" strokeWidth="2" /><circle cx="16" cy="25" r="4" fill="#ddd" /><circle cx="16" cy="25" r="2" fill="#c33" /></>],
  [false, <><rect x="-4" y="-4" width="40" height="40" rx="9" fill="#fff" /><g strokeWidth="3.500"><circle cx="9" cy="20" r="6" stroke="#29b6f6" /><circle cx="23" cy="20" r="6" stroke="#1e9bff" /><path d="M10 12a6 6 0 0 1 12 0" stroke="#29b6f6" /><path d="M10 12a6 6 0 0 0 12 0" stroke="#f6416c" /></g><path d="M9 35h7" stroke="#f6416c" strokeWidth="2" /><path d="M16 35h6" stroke="#1e7bff" strokeWidth="2" /></>],
  [true, <>{dark}<path d="m13 7 14 9-14 9z" fill="#19a7f5" /><path d="M6 12v8M10 12v8" stroke="#5b3df0" strokeWidth="2" /></>],
  [true, <>{white}<path d="M22 8v16L6 12M22 8 6 20" stroke="#1f7fd0" strokeWidth="4" /><path d="M22 5l5 2v18l-5 2z" fill="#2c9bec" /></>],
  [false, <><rect width="32" height="32" rx="7" fill="#0fa4f0" /><path d="M15 0h10l7 5v6z" fill="#f3ee3a" /><rect x="5" y="5" width="22" height="22" fill="#000" /><text x="16" y="17" textAnchor="middle" fontSize="12" fontWeight="800" fill="#fff">WS</text><path d="M8 23h8" stroke="#fff" strokeWidth="1.800" /></>],
  [false, <><rect x="1" y="1" width="30" height="30" rx="7" fill="#15201f" stroke="#000" strokeWidth="2" /><path d="M3 18h5l2-11 2 14 3-6 3 4 4-3 7 2" stroke="#2f8573" strokeWidth="1.300" /></>],
  [false, <>{white}<circle cx="16" cy="16" r="14" fill="#2490ee" /><path d="m25 7-7 11-4-4z" fill="#f04238" /><path d="M7 25l7-11 4 4z" fill="#fff" /></>],
  [false, <><rect width="32" height="32" rx="7" fill="#f3f1ec" /><path d="M0 8V7a7 7 0 0 1 7-7h18a7 7 0 0 1 7 7v1z" fill="#fcc419" /><path d="M0 15h32M0 21h32" stroke="#ddd" /></>],
  [false, <><rect width="32" height="32" rx="7" fill="#1e90f8" /><rect x="5" y="9" width="22" height="15" rx="2" fill="#f2f2f2" /><path d="m5 10 11 8 11-8M5 23l8-7m14 7-8-7" stroke="#aaa" strokeWidth="1.200" /></>],
  [false, <>{dark}<rect x="6" y="11" width="11" height="11" rx="2" fill="#16406c" /><path d="M14 8h13l-2 14H12z" fill="#10d0b8" /></>],
]

const running: [boolean, ReactNode][] = [
  [true, <><rect width="32" height="32" rx="2" fill="#3a92da" /><path d="M0 0h18c0 11-7 18-18 18z" fill="#8fd0f5" /><path d="M32 14c-11 0-17 8-17 18h17z" fill="#1b57b8" /><path d="M6 6h5l-1 3-3 1zM26 22v5h-5z" fill="#fff" /></>],
  [true, <>{dark}<circle cx="16" cy="16" r="10" stroke="#d5dbe3" strokeWidth="4" /><circle cx="16" cy="16" r="7" fill="#1ba7f2" /><path d="m18 18 10 9" stroke="#c9ced6" strokeWidth="4" /></>],
  [true, <><path d="M-1 32C-6 14 6 2 22 3" stroke="#f9e84a" strokeWidth="4" /><path d="M4 30 9 20 27 4l5 4-16 18z" fill="#cfcfcf" stroke="#888" /><path d="m26 2 6-4 4 5-5 6z" fill="#f9a61c" /><path d="m17 15 4 4" stroke="#e8d020" strokeWidth="4" /></>],
  [true, <>{white}<rect x="6" y="10" width="20" height="15" rx="3" stroke="#1fa86f" strokeWidth="2" /><path d="M12 15v1M20 15v1M12 20c2 2 6 2 8 0M16 10V6h4" stroke="#1fa86f" strokeWidth="2" strokeLinecap="round" /></>],
  [true, <><circle cx="16" cy="16" r="16" fill="#f4f0fa" stroke="#c14ce0" strokeWidth="1.600" /><path d="M9 11c5 2 10 1 14-5M7 15c6 3 13 2 16-3" stroke="#d43f58" strokeWidth="2.200" /><path d="M8 20c6 3 12 2 15-3" stroke="#b04ad0" strokeWidth="2.200" /><path d="M11 25c5 1 8 0 11-3" stroke="#4a72e8" strokeWidth="2.200" /></>],
]

const files: [boolean, ReactNode][] = [
  [false, <><path d="M0 5c0-2 1-3 3-3h7l3 3h16a3 3 0 0 1 3 3v6H0z" fill="#2a8cc4" /><path d="M14 4c4-4 12-3 14 2v3H12z" fill="#fff" /><path d="M0 9h32v20a2 2 0 0 1-2 2H2a2 2 0 0 1-2-2z" fill="#63c5f5" /><path d="m17 14-6 11m4-11 6 11M10 21h12" stroke="#3297cd" strokeWidth="1.600" /></>],
  [false, <><path d="M3 3h26l-4 30H7z" fill="#efefef" stroke="#c9c9c9" /><ellipse cx="16" cy="3" rx="13" ry="3.500" fill="#8a8f90" /><path d="m8 3 3-2 3 3 4-3 3 3 3-2" stroke="#333" strokeWidth="1.600" /></>],
]

const DockIcons = ({ items }: { items: [boolean, ReactNode][] }) => (
  <>
    {items.map(([dot, art], i) => (
      <div key={i} className="flex h-9 items-center pl-[8px]">
        <Svg className="size-[26px]">{art}</Svg>
        {dot && <i className="ml-[5px] size-1.5 rounded-full bg-[#5c5c5c]" />}
      </div>
    ))}
  </>
)

function Dock() {
  return (
    <div className="absolute left-[2626px] top-[448px] flex h-[832px] w-[52px] flex-col rounded-[13px] border border-[#e6e6e6] bg-[#d9d9d9] pt-[3px] shadow-[0_10px_70px_rgba(0,0,0,0.3),0_0_2px_rgba(0,0,0,0.4)]">
      <DockIcons items={apps} />
      <div className="mb-1.5 ml-[7px] mt-2 h-0.5 w-9 shrink-0 bg-[#a3a3a3]" />
      <DockIcons items={running} />
      <div className="mb-[7px] ml-[7px] mt-2 h-0.5 w-9 shrink-0 bg-[#a3a3a3]" />
      <DockIcons items={files} />
    </div>
  )
}

export default function App() {
  return (
    <div className="relative flex h-[1680px] w-[2688px] flex-col overflow-hidden bg-[linear-gradient(to_bottom,#2a4a78_40px,#2b4b7b_200px,#36547f_300px,#34527e_370px,#4a678f_420px,#58779a_515px,#416189_530px,#294b78_680px,#16385f_900px,#0b2548_1100px,#061a33_1250px,#030f1d_1420px,#02060e_1680px)] font-['Inter','Noto_Sans_CJK_SC',sans-serif]">
      <div className="absolute right-0 top-12 h-[1632px] w-10 bg-[linear-gradient(to_bottom,#03193b_0,#062046_250px,#143460_400px,#16386a_560px,#0e2b55_660px,#0c2850_900px,#081d3c_1250px,#020a18_1632px)]" />
      <MenuBar />
      <div className="relative ml-[38px] mt-0.5 flex h-[1630px] w-[2622px] flex-col overflow-hidden rounded-[22px] bg-white shadow-[0_0_3px_rgba(0,0,0,0.7),0_16px_40px_rgba(0,0,0,0.4)]">
        <TabStrip />
        <Toolbar />
        <Bookmarks />
        <Page />
      </div>
      <Dock />
    </div>
  )
}
